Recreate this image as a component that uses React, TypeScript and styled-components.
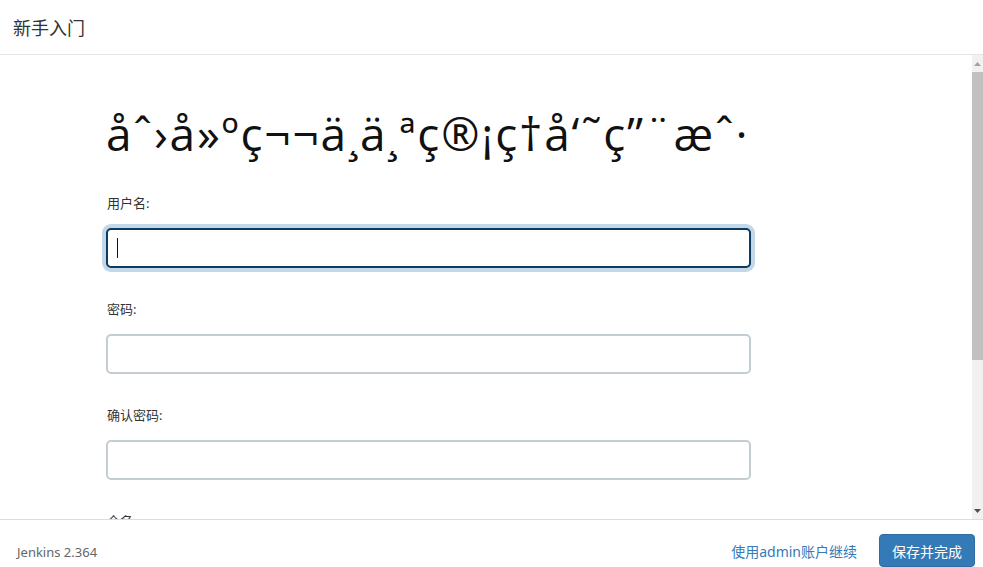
import React from 'react';
import styled, { createGlobalStyle, css } from 'styled-components';

const GlobalStyle = createGlobalStyle`
  html, body {
    margin: 0;
    padding: 0;
    height: 100%;
    background: #fff;
    font-family: "Noto Sans", "Noto Sans CJK SC", sans-serif;
    color: #333;
  }
  #root {
    height: 100%;
  }
  * {
    box-sizing: border-box;
  }
`;

const fields = [
  { label: '用户名:', type: 'text', focused: true },
  { label: '密码:', type: 'password' },
  { label: '确认密码:', type: 'password' },
  { label: '全名:', type: 'text' },
  { label: '电子邮件地址:', type: 'email' },
];

const App = () => {
  return (
    <>
      <GlobalStyle />
      <Wizard>
        <Header>新手入门</Header>
        <Body>
          <Scroller>
            <Form>
              <Title>åˆ›å»ºç¬¬ä¸ä¸ªç®¡ç†å‘˜ç”¨æˆ·</Title>
              {fields.map((f) => (
                <FieldGroup key={f.label}>
                  <Label>{f.label}</Label>
                  <InputWrap>
                    <Input type={f.type} focused={f.focused} />
                    {f.focused && <Caret />}
                  </InputWrap>
                </FieldGroup>
              ))}
            </Form>
          </Scroller>
          <ScrollBar>
            <ScrollButton>
              <svg width="11" height="16" viewBox="0 0 11 16">
                <path d="M2 10 L5.5 6 L9 10 Z" fill="#a3a3a3" />
              </svg>
            </ScrollButton>
            <ScrollThumb />
            <ScrollSpace />
            <ScrollButton>
              <svg width="11" height="16" viewBox="0 0 11 16">
                <path d="M2 6 L5.5 10 L9 6 Z" fill="#505050" />
              </svg>
            </ScrollButton>
          </ScrollBar>
        </Body>
        <Footer>
          <Version>Jenkins 2.364</Version>
          <Actions>
            <SkipLink href="#">使用admin账户继续</SkipLink>
            <SaveButton>保存并完成</SaveButton>
          </Actions>
        </Footer>
      </Wizard>
    </>
  );
};

export default App;

const Wizard = styled.div`
  height: 567px;
  display: flex;
  flex-direction: column;
`;

const Header = styled.div`
  height: 55px;
  flex: none;
  display: flex;
  align-items: center;
  padding-left: 13px;
  font-size: 18px;
  color: #333;
  border-bottom: 1px solid #e5e5e5;
`;

const Body = styled.div`
  flex: 1;
  min-height: 0;
  display: flex;
`;

const Scroller = styled.div`
  flex: 1;
  overflow: hidden;
`;

const ScrollBar = styled.div`
  width: 11px;
  flex: none;
  background: #f1f1f1;
  display: flex;
  flex-direction: column;
`;

const ScrollButton = styled.div`
  height: 17px;
  flex: none;
  display: flex;
  align-items: center;
  justify-content: center;
`;

const ScrollThumb = styled.div`
  height: 288px;
  flex: none;
  background: #c1c1c1;
`;

const ScrollSpace = styled.div`
  flex: 1;
`;

const Form = styled.div`
  width: 751px;
  padding: 50px 0 24px 106px;
`;

const Title = styled.h1`
  margin: 0 0 34px 0;
  font-family: "Open Sans", "Noto Sans", sans-serif;
  font-weight: 400;
  font-size: 46px;
  line-height: 56px;
  letter-spacing: 1.8px;
  color: #111;
  white-space: nowrap;
`;

const FieldGroup = styled.div`
  margin-bottom: 33px;
`;

const Label = styled.label`
  display: block;
  margin: 0 0 17px 1px;
  font-size: 13px;
  line-height: 16px;
  color: #333;
`;

const InputWrap = styled.div`
  position: relative;
  width: 645px;
`;

const Input = styled.input<{ focused?: boolean }>`
  display: block;
  width: 100%;
  height: 40px;
  padding: 0 10px;
  border: 2px solid #c3cdd2;
  border-radius: 5px;
  font-size: 14px;
  background: #fff;
  outline: none;
  ${(p) =>
    p.focused &&
    css`
      border-color: #0b3c5f;
      box-shadow: 0 0 0 4px #c2d7e7;
    `}
`;

const Caret = styled.span`
  position: absolute;
  left: 11px;
  top: 10px;
  width: 1px;
  height: 20px;
  background: #111;
`;

const Footer = styled.div`
  height: 48px;
  flex: none;
  border-top: 1px solid #dcdcdc;
  display: flex;
  align-items: flex-start;
  justify-content: space-between;
  padding: 14px 8px 0 17px;
`;

const Version = styled.span`
  margin-top: 9px;
  font-size: 13px;
  line-height: 18px;
  color: #666;
`;

const Actions = styled.div`
  display: flex;
  align-items: center;
  gap: 22px;
`;

const SkipLink = styled.a`
  font-size: 14px;
  color: #337ab7;
  text-decoration: none;
`;

const SaveButton = styled.button`
  height: 33px;
  width: 96px;
  border: 1px solid #2e6da4;
  border-radius: 4px;
  background: #337ab7;
  color: #fff;
  font-family: "Noto Sans", "Noto Sans CJK SC", sans-serif;
  font-size: 14px;
`;
